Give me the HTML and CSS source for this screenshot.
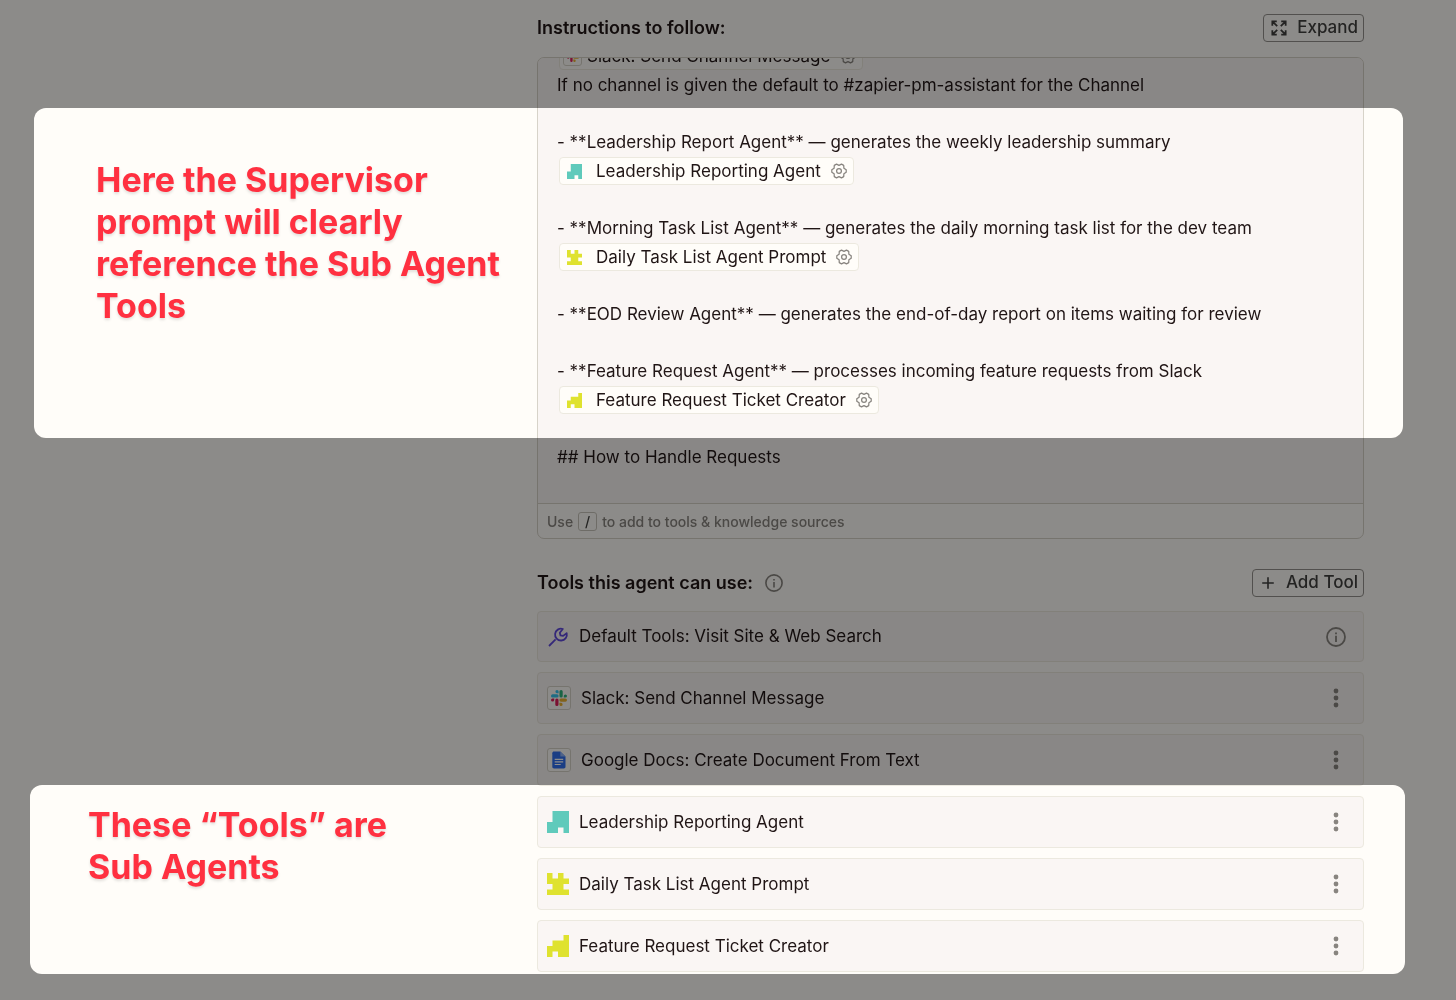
FILE: index.html
```html
<!DOCTYPE html>
<html lang="en">
<head>
<meta charset="UTF-8">
<meta name="viewport" content="width=device-width, initial-scale=1.0">
<title>Supervisor agent</title>
<link rel="stylesheet" href="styles.css">
</head>
<body>
    <!-- Shared icons -->
    <svg class="sprite" aria-hidden="true">
        <symbol id="gear" viewBox="0 0 18 18">
            <path d="M17.1 7.6v2.800L14.500 12.200l-.2 3.100-2.500 1.400L9 15.300l-2.800 1.400-2.500-1.400-.2-3.100L.9 10.400V7.600l2.600-1.800.2-3.100 2.500-1.400L9 2.700l2.800-1.400 2.500 1.400.2 3.100z" fill="none" stroke="currentColor" stroke-width="1.4" stroke-linejoin="round"/>
            <circle cx="9" cy="9" r="2.700" fill="none" stroke="currentColor" stroke-width="1.4"/>
        </symbol>
        <symbol id="info" viewBox="0 0 20 20">
            <circle cx="10" cy="10" r="9" fill="none" stroke="currentColor" stroke-width="1.8"/>
            <path d="M9.1 8.8h1.8V15H9.1zM9.1 5.5h1.8v1.8H9.1z" fill="currentColor"/>
        </symbol>
        <symbol id="dots" viewBox="0 0 6 20">
            <circle cx="3" cy="3" r="2.4" fill="currentColor"/>
            <circle cx="3" cy="10" r="2.4" fill="currentColor"/>
            <circle cx="3" cy="17" r="2.4" fill="currentColor"/>
        </symbol>
        <symbol id="slack" viewBox="0 0 16 16">
            <path d="M6 0a1.6 1.6 0 0 1 1.6 1.6v1.6H6A1.6 1.6 0 0 1 6 0zM1.6 4.3H6a1.6 1.6 0 0 1 0 3.2H1.6a1.6 1.6 0 0 1 0-3.2z" fill="#36c5f0"/>
            <path d="M16 6a1.6 1.6 0 0 1-1.6 1.6h-1.6V6A1.6 1.6 0 0 1 16 6zM8.5 1.6a1.6 1.6 0 0 1 3.2 0V6a1.6 1.6 0 0 1-3.2 0z" fill="#2eb67d"/>
            <path d="M10 16a1.6 1.6 0 0 1-1.6-1.6v-1.6H10a1.6 1.6 0 0 1 0 3.2zM10 8.5h4.4a1.6 1.6 0 0 1 0 3.2H10a1.6 1.6 0 0 1 0-3.2z" fill="#ecb22e"/>
            <path d="M0 10a1.6 1.6 0 0 1 1.6-1.6h1.6V10A1.6 1.6 0 0 1 0 10zM4.3 10a1.6 1.6 0 0 1 3.2 0v4.4a1.6 1.6 0 0 1-3.2 0z" fill="#e01e5a"/>
        </symbol>
        <symbol id="leadership" viewBox="0 0 4 4">
            <path d="M1 0h3v4H3V3H2v1H0V2h1z" fill="#5fcabb"/>
        </symbol>
        <symbol id="daily" viewBox="0 0 4 4">
            <path d="M0 0h1v1h1V0h1v1h1v1H3v1h1v1H0V3h1V2H0z" fill="#dfe22f"/>
        </symbol>
        <symbol id="feature" viewBox="0 0 4 4">
            <path d="M3 0h1v4H2V3H1v1H0V2h1V1h2z" fill="#dfe22f"/>
        </symbol>
    </svg>

    <main class="page">
        <section class="instructions">
            <div class="section-head">
                <h2>Instructions to follow:</h2>
                <button class="btn">
                    <svg class="btn-icon" viewBox="0 0 18 18" fill="none" stroke="currentColor" stroke-width="2"><path d="M1.500 6.500v-5h5M1.500 1.500l5.500 5.500M11.500 1.500h5v5M16.500 1.500L11 7M1.500 11.500v5h5M1.500 16.500L7 11M16.500 11.500v5h-5M16.500 16.500L11 11"/></svg>
                    Expand
                </button>
            </div>
            <div class="editor">
                <div class="editor-text">
                    <div class="block">
                        <p><span class="chip"><span class="app-icon small"><svg><use href="#slack"/></svg></span>Slack: Send Channel Message<svg class="gear"><use href="#gear"/></svg></span></p>
                        <p>If no channel is given the default to #zapier-pm-assistant for the Channel</p>
                    </div>
                    <div class="block">
                        <p>- **Leadership Report Agent** — generates the weekly leadership summary</p>
                        <p><span class="chip"><svg class="chip-icon"><use href="#leadership"/></svg>Leadership Reporting Agent<svg class="gear"><use href="#gear"/></svg></span></p>
                    </div>
                    <div class="block">
                        <p>- **Morning Task List Agent** — generates the daily morning task list for the dev team</p>
                        <p><span class="chip"><svg class="chip-icon"><use href="#daily"/></svg>Daily Task List Agent Prompt<svg class="gear"><use href="#gear"/></svg></span></p>
                    </div>
                    <div class="block">
                        <p>- **EOD Review Agent** — generates the end-of-day report on items waiting for review</p>
                    </div>
                    <div class="block">
                        <p>- **Feature Request Agent** — processes incoming feature requests from Slack</p>
                        <p><span class="chip"><svg class="chip-icon"><use href="#feature"/></svg>Feature Request Ticket Creator<svg class="gear"><use href="#gear"/></svg></span></p>
                    </div>
                    <div class="block">
                        <p>## How to Handle Requests</p>
                    </div>
                </div>
                <div class="editor-hint">Use <kbd>/</kbd> to add to tools &amp; knowledge sources</div>
            </div>
        </section>

        <section class="tools">
            <div class="section-head">
                <h2>Tools this agent can use: <svg class="info"><use href="#info"/></svg></h2>
                <button class="btn">
                    <svg class="btn-icon" viewBox="0 0 18 18" fill="none" stroke="currentColor" stroke-width="1.8"><path d="M9 2.500v13M2.500 9h13"/></svg>
                    Add Tool
                </button>
            </div>
            <ul class="tool-list">
                <li class="tool default">
                    <svg class="wrench" viewBox="0 0 22 22" fill="none" stroke="#5f48dd" stroke-width="1.8"><path d="M2 20l6.600-6.600"/><path d="M15.800 3a5.900 5.900 0 1 0 3.900 4.200l-3.600 2.700-2.600-.5-.7-2.700z" stroke-linejoin="round"/></svg>
                    <span class="tool-name">Default Tools: Visit Site &amp; Web Search</span>
                    <button class="icon-btn" aria-label="About default tools"><svg class="info large"><use href="#info"/></svg></button>
                </li>
                <li class="tool">
                    <span class="app-icon"><svg><use href="#slack"/></svg></span>
                    <span class="tool-name">Slack: Send Channel Message</span>
                    <button class="icon-btn" aria-label="Tool menu"><svg class="dots"><use href="#dots"/></svg></button>
                </li>
                <li class="tool">
                    <span class="app-icon"><svg viewBox="0 0 16 16"><path d="M3-.5h6.300l5.200 5v10.300c0 1-.7 1.700-1.700 1.700H3c-1 0-1.700-.7-1.700-1.700v-13.600C1.300.2 2-.5 3-.5z" fill="#2f6ff0"/><path d="M9.300-.5l5.200 5H9.300z" fill="#8fb4fa"/><path d="M3.700 7.300h8.500M3.700 9.900h8.500M3.700 12.500h6" stroke="#fff" stroke-width="1.200"/></svg></span>
                    <span class="tool-name">Google Docs: Create Document From Text</span>
                    <button class="icon-btn" aria-label="Tool menu"><svg class="dots"><use href="#dots"/></svg></button>
                </li>
                <li class="tool">
                    <svg class="agent-icon"><use href="#leadership"/></svg>
                    <span class="tool-name">Leadership Reporting Agent</span>
                    <button class="icon-btn" aria-label="Tool menu"><svg class="dots"><use href="#dots"/></svg></button>
                </li>
                <li class="tool">
                    <svg class="agent-icon"><use href="#daily"/></svg>
                    <span class="tool-name">Daily Task List Agent Prompt</span>
                    <button class="icon-btn" aria-label="Tool menu"><svg class="dots"><use href="#dots"/></svg></button>
                </li>
                <li class="tool">
                    <svg class="agent-icon"><use href="#feature"/></svg>
                    <span class="tool-name">Feature Request Ticket Creator</span>
                    <button class="icon-btn" aria-label="Tool menu"><svg class="dots"><use href="#dots"/></svg></button>
                </li>
            </ul>
        </section>
    </main>

    <!-- Dims the page, the white areas stay bright -->
    <div class="dim">
        <div class="spotlight spotlight-prompt"></div>
        <div class="spotlight spotlight-tools"></div>
    </div>
    <p class="note note-prompt">Here the Supervisor prompt will clearly reference the Sub Agent Tools</p>
    <p class="note note-tools">These “Tools” are Sub Agents</p>
</body>
</html>
```
FILE: styles.css
```css
* {
    box-sizing: border-box;
}

body {
    position: relative;
    margin: 0;
    min-height: 100vh;
    overflow-x: hidden;
    font-family: Inter, sans-serif;
    font-size: 17px;
    line-height: 29px;
    color: #201515;
    background-color: #fffdf9;
}

h2, p, ul {
    margin: 0;
    padding: 0;
}

svg {
    display: block;
    flex: none;
    overflow: visible;
}

.sprite {
    position: absolute;
    width: 0;
    height: 0;
}

.page {
    display: flex;
    flex-direction: column;
    gap: 29px;
    padding: 13px 92px 27px 537px;
}

.section-head {
    display: flex;
    justify-content: space-between;
    align-items: center;
    margin-bottom: 15px;
}

.tools .section-head {
    margin-bottom: 14px;
}

h2 {
    display: flex;
    align-items: center;
    gap: 12px;
    font-size: 18px;
    font-weight: 600;
}

.btn {
    display: flex;
    align-items: center;
    gap: 10px;
    height: 28px;
    padding: 0 5px 0 7px;
    font: inherit;
    font-weight: 500;
    color: #403f3e;
    background: none;
    border: 1px solid #95928e;
    border-radius: 4px;
}

.btn-icon {
    width: 16px;
    height: 16px;
}

/* Prompt editor */
.editor {
    border: 1px solid #d7d3c9;
    border-radius: 7px;
    overflow: hidden;
}

.editor-text {
    display: flex;
    flex-direction: column;
    justify-content: flex-end;
    gap: 28px;
    height: 445px;
    padding: 0 19px 31px;
    background-color: #faf6f4;
    overflow: hidden;
}

.block p {
    height: 29px;
}

.chip {
    display: inline-flex;
    align-items: center;
    height: 28px;
    margin-left: 2px;
    padding: 0 6px 0 7px;
    vertical-align: top;
    background-color: #fffdf9;
    border: 1px solid #ece9df;
    border-radius: 4px;
}

.chip-icon {
    width: 15px;
    height: 15px;
    margin-right: 14px;
}

.gear {
    width: 16px;
    height: 16px;
    margin-left: 10px;
    color: #88847f;
}

.editor-hint {
    display: flex;
    align-items: center;
    gap: 5px;
    height: 35px;
    padding: 0 9px;
    font-size: 14px;
    font-weight: 500;
    color: #88847f;
    border-top: 1px solid #d7d3c9;
}

kbd {
    width: 19px;
    height: 19px;
    font: inherit;
    line-height: 17px;
    text-align: center;
    color: #403f3e;
    border: 1px solid #c9c5bc;
    border-radius: 3px;
}

/* Tools */
.tool-list {
    display: flex;
    flex-direction: column;
    gap: 10px;
    list-style: none;
}

.tool {
    display: flex;
    align-items: center;
    gap: 10px;
    height: 52px;
    padding: 0 16px 0 9px;
    background-color: #faf6f4;
    border: 1px solid #ece9df;
    border-radius: 4px;
}

.tool.default {
    height: 51px;
}

.tool-name {
    flex: 1;
}

.wrench,
.agent-icon {
    width: 22px;
    height: 22px;
}

.app-icon {
    display: flex;
    flex: none;
    align-items: center;
    justify-content: center;
    width: 24px;
    height: 24px;
    background-color: #fffdf9;
    border: 1px solid #d7d3c9;
    border-radius: 3px;
}

.app-icon svg {
    width: 16px;
    height: 16px;
}

.app-icon.small {
    width: 19px;
    height: 19px;
    margin: 0 5px 0 -4px;
}

.app-icon.small svg {
    width: 12px;
    height: 12px;
}

.icon-btn {
    display: flex;
    justify-content: center;
    width: 22px;
    padding: 0;
    color: #88847f;
    background: none;
    border: none;
}

.info {
    width: 18px;
    height: 18px;
    color: #88847f;
}

.info.large {
    width: 20px;
    height: 20px;
}

.dots {
    width: 6px;
    height: 20px;
}

/* Highlight overlay and notes */
.dim {
    position: absolute;
    inset: 0;
    background-color: #8c8c8c;
    mix-blend-mode: multiply;
    pointer-events: none;
}

.spotlight {
    position: absolute;
    background-color: #fff;
    border-radius: 12px;
}

.spotlight-prompt {
    top: 108px;
    left: 34px;
    right: 53px;
    height: 330px;
}

.spotlight-tools {
    top: 785px;
    left: 30px;
    right: 51px;
    height: 189px;
}

.note {
    position: absolute;
    width: 430px;
    font-size: 34px;
    font-weight: 700;
    line-height: 42px;
    color: #ff3040;
    text-shadow: 0 2px 3px rgba(0, 0, 0, 0.12);
}

.note-prompt {
    top: 159px;
    left: 96px;
}

.note-tools {
    top: 804px;
    left: 88px;
    width: 320px;
}
```
